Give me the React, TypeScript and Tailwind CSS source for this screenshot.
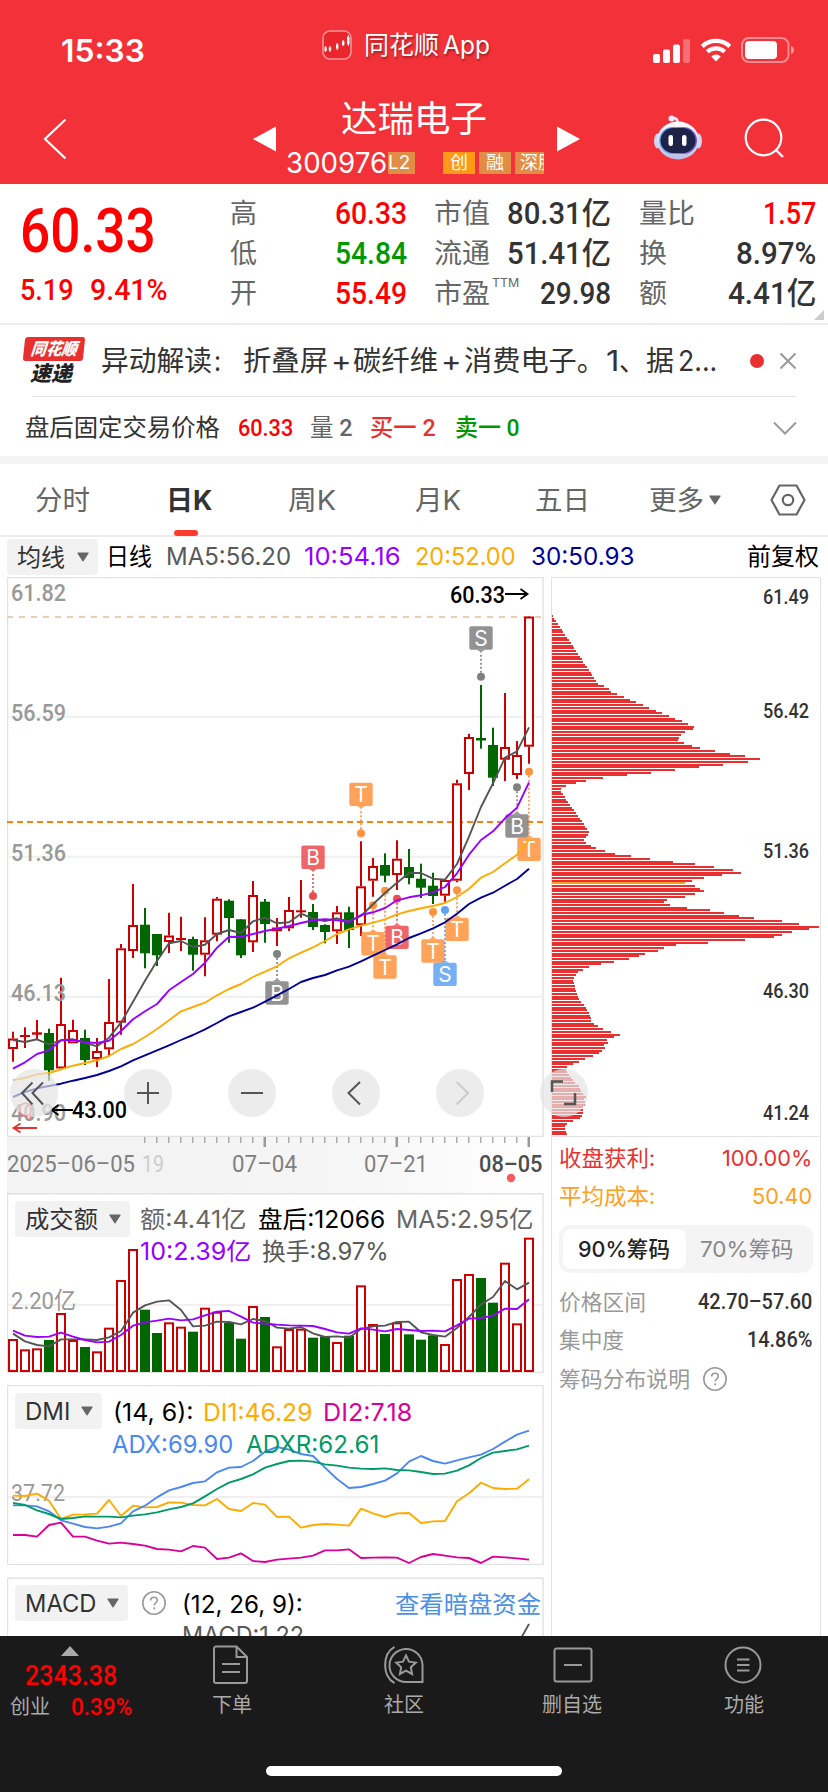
import React, { useLayoutEffect, useRef, useState } from "react"

const UI = "[font-family:Inter,'Noto_Sans_CJK_SC',sans-serif]"
const DIN = "[font-family:Roboto,'Noto_Sans_CJK_SC',sans-serif]"

interface FitProps {
  w: number
  className?: string
  children: React.ReactNode
}

// Single line label that is squeezed or stretched to an exact width
const Fit: React.FC<FitProps> = ({ w, className = "", children }) => {
  const ref = useRef<HTMLSpanElement>(null)
  const [scale, setScale] = useState(1)

  useLayoutEffect(() => {
    if (ref.current) setScale(w / ref.current.offsetWidth)
  }, [w])

  return (
    <span className={`block shrink-0 whitespace-nowrap leading-none ${className}`} style={{ width: w }}>
      <span ref={ref} className="inline-block origin-left" style={{ transform: `scaleX(${scale})` }}>
        {children}
      </span>
    </span>
  )
}

const X0 = 13
const STEP = 12
const cx = (i: number) => X0 + i * STEP

// [up, high, bodyTop, bodyBottom, low]
type Candle = [number, number, number, number, number]

const CANDLES: Candle[] = [
  [1, 1031.7, 1038.5, 1049, 1061.7],
  [1, 1027.3, 1035, 1037, 1048],
  [1, 1020, 1032.3, 1034.7, 1039],
  [0, 1028.7, 1033, 1070.3, 1080.7],
  [1, 977.7, 1024, 1068.5, 1068.5],
  [1, 1019.7, 1030, 1043.3, 1043.3],
  [0, 1029.7, 1038, 1060, 1065],
  [1, 1038, 1051, 1059, 1067],
  [1, 979, 1022, 1049.3, 1056],
  [1, 944, 948.3, 1022.7, 1034.7],
  [1, 884, 925, 951, 958],
  [0, 908, 924.7, 953.3, 968.3],
  [0, 934, 934, 955.3, 966],
  [1, 912.7, 935.5, 942, 953],
  [1, 916.7, 938, 940, 951],
  [0, 936.7, 939, 954.7, 970.7],
  [1, 917.3, 940.3, 954.7, 976.3],
  [1, 897, 898.7, 934.7, 941.3],
  [0, 899.3, 900.7, 918, 942.7],
  [0, 919.3, 919.3, 955.3, 958],
  [1, 881, 895, 942.3, 952],
  [0, 899, 901.7, 924, 942.7],
  [1, 918, 927.5, 931.3, 946],
  [1, 897, 910, 928.3, 931],
  [1, 880, 910.3, 912.3, 917.7],
  [0, 904, 912, 927, 930],
  [0, 924.3, 925, 932, 943.3],
  [1, 906, 912.3, 931.3, 944],
  [0, 906.7, 912.3, 930, 948],
  [1, 841.3, 886.3, 925.3, 936],
  [1, 858, 866, 880.7, 896.7],
  [0, 853.3, 865, 875.7, 882.3],
  [1, 840.3, 858.7, 875, 890],
  [0, 849, 867, 878, 884.3],
  [0, 863.7, 878.7, 887.7, 898],
  [0, 872.7, 885.7, 896, 904],
  [1, 880, 880, 895.7, 901.7],
  [1, 779.7, 783.3, 880.7, 882.3],
  [1, 733.7, 737, 774, 790],
  [0, 685, 738, 740.5, 748.7],
  [0, 727.7, 745, 777.7, 786],
  [1, 693, 747, 759.7, 781],
  [1, 741, 755, 775, 779],
  [1, 616, 616.5, 746.7, 763.7],
]

const MA5 = [1040, 1042, 1039.3, 1044.3, 1040.3, 1039.3, 1042.7, 1046.3, 1037.7, 1022.7, 1001.7, 980.7, 961, 943.3, 941, 947, 944.7, 934, 930, 933, 921.3, 917.7, 923.3, 922.3, 913.7, 918.7, 921, 918.3, 921.3, 916, 904.3, 893, 882.7, 873, 873, 878.7, 879.7, 864, 836.7, 807, 783.3, 757.7, 751.3, 727.3]
const MA10 = [1068.7, 1062.3, 1054, 1050.3, 1040.3, 1039.7, 1042.3, 1043, 1040.7, 1031, 1019.3, 1011.3, 1004, 990.3, 982, 974, 962.7, 947.7, 936.7, 937, 934, 931, 928.7, 926, 923, 920.3, 919.3, 920.3, 922, 915, 912.3, 908, 900.3, 897.3, 895.3, 892.3, 887, 873.3, 854.7, 840, 831.3, 818.3, 807.7, 782.3]
const MA20 = [1080.3, 1078, 1074.3, 1073, 1069.3, 1065.7, 1063, 1060.3, 1056, 1049, 1044, 1037, 1029, 1020.3, 1011.3, 1007, 1002.7, 995.3, 989, 984, 977, 971.7, 966.3, 958.3, 952.7, 947.3, 941, 934, 929.3, 925.7, 922.7, 919.3, 914.3, 911, 908.3, 906, 903, 897, 888.7, 877.7, 872, 863.3, 854.7, 840]
const MA30 = [1097, 1092, 1088.3, 1086, 1083.7, 1080.7, 1078, 1075, 1071, 1066.3, 1060.3, 1055.3, 1050.3, 1045.3, 1040, 1035, 1029.3, 1023, 1016.3, 1012, 1007.7, 1001.7, 995.3, 989, 982, 978, 975, 970.3, 966.7, 961.3, 955.7, 950, 944.3, 938, 933.3, 928.3, 922.3, 913.7, 904, 897.7, 892.7, 885.7, 879, 868.7]

// [candle index, dot y, badge top, letter, colour]
const MARKS: [number, number, number, string, string][] = [
  [39, 676.7, 626.3, "S", "#808080"],
  [29, 833.3, 782.7, "T", "#ff923e"],
  [25, 896, 845.6, "B", "#ec4c50"],
  [22, 954, 981.3, "B", "#808080"],
  [30, 905.3, 932, "T", "#ff923e"],
  [31, 890.7, 955.3, "T", "#ff923e"],
  [32, 898.7, 925.7, "B", "#ec4c50"],
  [35, 912, 939.3, "T", "#ff923e"],
  [36, 910, 962.7, "S", "#5da2f3"],
  [37, 890.3, 917.7, "T", "#ff923e"],
  [42, 787.3, 814.3, "B", "#808080"],
  [43, 771.7, 837.7, "T", "#ff923e"],
]

const VOLUME = [480, 511, 508, 483, 402, 483, 504, 517, 446, 303, 210, 392, 462, 430, 443, 458, 386, 398, 432, 479, 381, 414, 502, 450, 449, 476, 473, 489, 470, 319, 435, 465, 430, 466, 482, 469, 495, 300, 285, 297, 371, 251, 433, 176]
const VOL5 = [461, 484, 495, 499, 478, 478, 478, 480, 472, 453, 398, 376, 365, 361, 390, 439, 437, 425, 426, 433, 417, 423, 443, 446, 441, 460, 471, 469, 473, 447, 439, 437, 426, 425, 457, 465, 470, 444, 411, 373, 351, 303, 328, 308]
const VOL10 = [452, 467, 471, 470, 458, 470, 480, 487, 485, 465, 437, 427, 422, 416, 421, 418, 406, 395, 393, 410, 428, 431, 434, 436, 437, 438, 447, 457, 461, 445, 449, 454, 447, 450, 453, 452, 454, 436, 416, 414, 407, 386, 387, 358]

const DI1 = [377, 378, 371, 392, 447, 434, 433, 431, 390, 438, 407, 412, 411, 397, 398, 405, 406, 387, 417, 423, 399, 404, 441, 440, 473, 465, 462, 464, 467, 416, 430, 441, 430, 429, 459, 454, 453, 394, 370, 338, 354, 357, 356, 328]
const DI2 = [495, 495, 500, 465, 458, 500, 500, 512, 521, 518, 522, 527, 537, 539, 544, 528, 533, 567, 563, 550, 573, 576, 569, 566, 563, 557, 541, 541, 538, 564, 563, 562, 563, 579, 561, 552, 557, 562, 564, 579, 560, 562, 565, 569]
const ADX = [406, 406, 409, 424, 451, 461, 471, 475, 470, 460, 424, 407, 382, 361, 351, 339, 334, 307, 293, 291, 273, 245, 231, 239, 252, 258, 293, 327, 354, 351, 342, 332, 310, 275, 258, 273, 281, 271, 262, 254, 237, 215, 194, 182]
const ADXR = [399, 405, 421, 432, 447, 444, 439, 440, 440, 442, 437, 433, 427, 418, 411, 400, 379, 357, 338, 327, 313, 293, 282, 273, 272, 275, 283, 287, 293, 296, 297, 295, 300, 301, 306, 312, 311, 302, 286, 264, 248, 243, 238, 227]

// Cost distribution, one entry per price level, thirds of a pixel
const CHIPS = [
  24, 27, 33, 39, 45, 51, 54, 60, 66, 72, 78, 84, 87, 93, 99, 105, 111, 114, 120, 126, 132, 138, 141, 147, 153, 159, 177, 192, 198, 216,
  237, 255, 273, 294, 312, 333, 351, 372, 390, 411, 429, 447, 444, 420, 408, 402, 399, 417, 441, 465, 510, 555, 600, 645, 609, 534, 462,
  390, 318, 246, 174, 123, 93, 63, 48, 48, 54, 60, 63, 69, 75, 81, 87, 93, 99, 105, 111, 117, 120, 126, 132, 129, 123, 117, 123, 138, 153,
  180, 210, 258, 315, 384, 450, 507, 564, 588, 531, 477, 441, 420, 450, 465, 477, 450, 420, 366, 357, 375, 426, 495, 537, 582, 627, 711,
  762, 822, 792, 741, 711, 687, 600, 489, 393, 357, 339, 300, 282, 252, 207, 168, 132, 114, 99, 93, 87, 84, 87, 90, 90, 93, 96, 99, 102,
  108, 117, 123, 126, 132, 135, 138, 138, 147, 159, 174, 198, 225, 207, 186, 189, 177, 180, 171, 162, 144, 120, 102, 84, 66, 63, 66, 72,
  78, 84, 90, 102, 105, 108, 114, 123, 117, 120, 120, 114, 114, 114, 111, 105, 84, 66, 60, 60, 63, 66, 66,
]
const CHIP_STEP = 2.7
const AVG_COST_LEVEL = 99

const line = (ys: number[], base = 0, k = 1) => ys.map((y, i) => `${cx(i)},${base + y * k}`).join(" ")

const Line = ({ ys, color, base = 0, k = 1 }: { ys: number[]; color: string; base?: number; k?: number }) => (
  <polyline points={line(ys, base, k)} fill="none" stroke={color} strokeWidth="1.9" strokeLinejoin="round" />
)

const AxisText = ({ x, y, w, children, fill = "#999", size = 24, weight = 500 }: {
  x: number; y: number; w: number; children: string; fill?: string; size?: number; weight?: number
}) => (
  <text x={x} y={y} textLength={w} lengthAdjust="spacingAndGlyphs" fontSize={size} fontWeight={weight} fill={fill} className={DIN}>
    {children}
  </text>
)

const Caret = ({ className = "" }: { className?: string }) => (
  <svg width="12" height="10" viewBox="0 0 12 10" className={`shrink-0 ${className}`}>
    <path d="M1 .5h10a.6.6 0 0 1 .5 1L6.6 8.9a.7.7 0 0 1-1.2 0L.5 1.5a.6.6 0 0 1 .5-1Z" fill="#666" />
  </svg>
)

const HelpIcon = ({ className = "" }: { className?: string }) => (
  <svg width="26" height="26" viewBox="0 0 26 26" className={`shrink-0 ${className}`}>
    <circle cx="13" cy="13" r="11.2" fill="none" stroke="#999" strokeWidth="1.6" />
    <path d="M9.7 10.6c0-2 1.4-3.3 3.3-3.3s3.3 1.2 3.3 3c0 2.4-3.1 2.6-3.1 5.2" fill="none" stroke="#999" strokeWidth="1.6" />
    <circle cx="13.2" cy="18.3" r="1.1" fill="#999" />
  </svg>
)

const StatusBar = () => (
  <div className="flex h-[92px] items-center pt-1 text-white">
    <Fit w={84} className={`${UI} ml-[61px] mt-1 text-[31px] font-semibold`}>15:33</Fit>
    <svg width="30" height="30" viewBox="0 0 30 30" className="ml-[177px] -mt-[6px]">
      <rect x="1" y="1" width="28" height="28" rx="7" fill="#e8262b" stroke="#f79598" strokeWidth="1.6" />
      <path d="M3.500 16v6M8 16v6M15.200 13v7M21.200 10v6M26.300 5v11" stroke="#fff" strokeWidth="1" />
      <path d="M2.500 17h2.200v4H2.500zM6.800 17.500h2.400v3H6.800zM14 14.500h2.400v4H14zM20 11h2.400v4H20zM25 7h2.500v7H25z" fill="#fff" />
    </svg>
    <div className={`${UI} -mt-[5px] ml-3 flex items-center text-[25px] [text-shadow:1px_2px_2px_rgba(0,0,0,.35)]`}>
      <Fit w={75}>同花顺</Fit>
      <Fit w={47} className="ml-1">App</Fit>
    </div>
    <svg width="38" height="24" viewBox="0 0 38 24" className="ml-[163px] mt-1.5">
      <rect x="0" y="15" width="7" height="9" rx="2" fill="#fff" />
      <rect x="10" y="10.500" width="7" height="13.500" rx="2" fill="#fff" />
      <rect x="20" y="5.500" width="7" height="18.500" rx="2" fill="#fff" />
      <rect x="30" y="0" width="7" height="24" rx="2" fill="#fff" opacity=".3" />
    </svg>
    <svg width="32" height="24" viewBox="0 0 32 24" className="ml-[9px] mt-1">
      <path d="M2.200 8.300a20.500 20.500 0 0 1 27.600 0" fill="none" stroke="#fff" strokeWidth="4.300" />
      <path d="M7.300 13.800a13 13 0 0 1 17.400 0" fill="none" stroke="#fff" strokeWidth="4.200" />
      <path d="M11.300 18.400a7 7 0 0 1 9.400 0L16 23.500Z" fill="#fff" />
    </svg>
    <svg width="54" height="26" viewBox="0 0 54 26" className="ml-[9px] mt-1">
      <rect x="1" y="1" width="46.500" height="24" rx="7" fill="none" stroke="#fff" strokeOpacity=".45" strokeWidth="2" />
      <rect x="4" y="4" width="32" height="18" rx="4" fill="#fff" />
      <path d="M50 9c4 1 4 7 0 8Z" fill="#fff" fillOpacity=".5" />
    </svg>
  </div>
)

const RobotIcon = () => (
  <svg width="50" height="46" viewBox="0 0 50 46">
    <defs>
      <linearGradient id="shell" x1="0" y1="0" x2="0" y2="1">
        <stop offset="0" stopColor="#ffffff" />
        <stop offset="1" stopColor="#b9bfe6" />
      </linearGradient>
      <linearGradient id="visor" x1="0" y1="0" x2="1" y2="0">
        <stop offset="0" stopColor="#63b7ef" />
        <stop offset="1" stopColor="#7a4be0" />
      </linearGradient>
    </defs>
    <path d="M18 3.500c3-1.500 7 0 6.500 4.500" fill="none" stroke="#e9e6f7" strokeWidth="2.600" />
    <circle cx="18.500" cy="3.500" r="3" fill="#efeafa" />
    <ellipse cx="4.500" cy="26" rx="3.500" ry="7.500" fill="#cfd3ef" />
    <ellipse cx="45.500" cy="26" rx="3.500" ry="7.500" fill="#cfd3ef" />
    <ellipse cx="25" cy="25.500" rx="21" ry="19" fill="url(#shell)" />
    <rect x="6" y="12" width="38" height="27" rx="13.500" fill="url(#visor)" />
    <rect x="7.500" y="13" width="35" height="25" rx="12.500" fill="#1d2247" />
    <rect x="15.500" y="20" width="4.500" height="11" rx="2.200" fill="#fff" />
    <rect x="29" y="20" width="4.500" height="11" rx="2.200" fill="#fff" />
  </svg>
)

const TitleBar = () => (
  <div className="flex h-[92px] text-white">
    <svg width="24" height="42" viewBox="0 0 24 42" className="ml-[43px] mt-[26px]">
      <path d="M22.500 1.500 2 21l20.500 19.500" fill="none" stroke="#fff" strokeWidth="2.200" />
    </svg>
    <svg width="24" height="26" viewBox="0 0 24 26" className="ml-[186px] mt-[34px]">
      <path d="M0 13 23 .5v25Z" fill="#fff" />
    </svg>
    <div className="ml-[9px] w-[259px] pt-[9px]">
      <Fit w={146} className={`${UI} ml-[55px] text-[36px]`}>达瑞电子</Fit>
      <div className={`${UI} mt-[14px] flex h-[24px] items-center`}>
        <Fit w={101} className="text-[28px]">300976</Fit>
        <span className="ml-px flex h-[22px] w-[27px] items-center bg-[#e18d45] text-[18px] leading-none">
          <Fit w={22}>L2</Fit>
        </span>
        <div className="ml-[28px] flex w-[101px] gap-1 overflow-hidden text-[18px] leading-none">
          <span className="flex h-[22px] w-8 shrink-0 items-center justify-center bg-[#ff9a17]">创</span>
          <span className="flex h-[22px] w-8 shrink-0 items-center justify-center bg-[#e18d45]">融</span>
          <span className="flex h-[22px] w-12 shrink-0 items-center bg-[#e18d45] pl-[5px]">深股</span>
        </div>
      </div>
    </div>
    <svg width="24" height="26" viewBox="0 0 24 26" className="ml-[11px] mt-[34px]">
      <path d="M1 .5 24 13 1 25.500Z" fill="#fff" />
    </svg>
    <div className="ml-[73px] mt-[23px]">
      <RobotIcon />
    </div>
    <svg width="42" height="42" viewBox="0 0 42 42" className="ml-[41px] mt-[26px]">
      <circle cx="19.500" cy="19.500" r="17.800" fill="none" stroke="#fff" strokeWidth="2.200" />
      <path d="m32 32 7 7" stroke="#fff" strokeWidth="2.400" />
    </svg>
  </div>
)

const QUOTES = [
  [
    { label: "高", lw: 27, value: "60.33", w: 72, color: "text-[#ff0000]" },
    { label: "低", lw: 27, value: "54.84", w: 72, color: "text-[#009900]" },
    { label: "开", lw: 27, value: "55.49", w: 72, color: "text-[#ff0000]" },
  ],
  [
    { label: "市值", lw: 56, value: "80.31亿", w: 104, color: "text-[#333]" },
    { label: "流通", lw: 56, value: "51.41亿", w: 104, color: "text-[#333]" },
    { label: "市盈", lw: 56, value: "29.98", w: 71, color: "text-[#333]", sup: "TTM" },
  ],
  [
    { label: "量比", lw: 56, value: "1.57", w: 53, color: "text-[#ff0000]" },
    { label: "换", lw: 28, value: "8.97%", w: 80, color: "text-[#333]" },
    { label: "额", lw: 28, value: "4.41亿", w: 88, color: "text-[#333]" },
  ],
]
const QUOTE_COLS = ["ml-[60px] w-[177px]", "ml-[27px] w-[177px]", "ml-[28px] w-[177px]"]

const Quote = () => (
  <div className="relative flex h-[141px] border-b-2 border-[#ececec]">
    <div className={`${DIN} ml-5 w-[150px] pt-[17px] text-[#ff0000]`}>
      <Fit w={136} className="text-[61px] font-medium">60.33</Fit>
      <div className="mt-[13px] flex text-[30px] font-medium">
        <Fit w={54}>5.19</Fit>
        <Fit w={78} className="ml-4">9.41%</Fit>
      </div>
    </div>
    {QUOTES.map((col, c) => (
      <div key={c} className={`${QUOTE_COLS[c]} pt-[9px]`}>
        {col.map((q, r) => (
          <div key={r} className="flex h-10 items-center">
            <Fit w={q.lw} className={`${UI} text-[27px] text-[#666]`}>{q.label}</Fit>
            {q.sup && <Fit w={27} className={`${UI} -mt-[20px] ml-0.5 text-[12px] text-[#666]`}>{q.sup}</Fit>}
            <Fit w={q.w} className={`${DIN} ml-auto text-[31px] font-medium ${q.color}`}>{q.value}</Fit>
          </div>
        ))}
      </div>
    ))}
    <svg width="10" height="10" className="absolute bottom-[3px] right-1">
      <path d="M10 0v10H0Z" fill="#ccc" />
    </svg>
  </div>
)

const Notice = () => (
  <div className="h-[139px] border-b-8 border-[#f4f4f4]">
    <div className="flex h-[71px] items-center">
      <div className={`${UI} ml-6 w-[60px]`}>
        <div className="flex h-6 -skew-x-6 items-center justify-center rounded-[3px] bg-[#e8302f] text-white">
          <Fit w={46} className="text-[17px] font-black italic">同花顺</Fit>
        </div>
        <Fit w={42} className="ml-[6px] mt-[2px] text-[21px] font-black italic text-[#222]">速递</Fit>
      </div>
      <div className={`${UI} ml-[17px] flex text-[28px] text-[#333]`}>
        <Fit w={111}>异动解读</Fit>
        <Fit w={7} className="ml-0.5">:</Fit>
        <Fit w={85} className="ml-[22px]">折叠屏</Fit>
        <Fit w={21} className="ml-[3px]">+</Fit>
        <Fit w={85} className="ml-[1px]">碳纤维</Fit>
        <Fit w={21} className="ml-[3px]">+</Fit>
        <Fit w={141} className="ml-[2px]">消费电子。</Fit>
        <Fit w={13} className="ml-[1px]">1</Fit>
        <Fit w={26}>、</Fit>
        <Fit w={28} className="ml-[1px]">据</Fit>
        <Fit w={39} className="ml-[4px]">2...</Fit>
      </div>
      <span className="ml-auto h-[14px] w-[14px] rounded-full bg-[#e8302f]" />
      <svg width="18" height="18" viewBox="0 0 18 18" className="ml-[15px] mr-[31px]">
        <path d="m1.500 1.500 15 15m0-15-15 15" stroke="#999" strokeWidth="2" />
      </svg>
    </div>
    <div className="ml-8 mr-8 h-px bg-[#e6e6e6]" />
    <div className={`${DIN} flex h-[62px] items-center text-[24px]`}>
      <Fit w={195} className="ml-[25px] text-[#333]">盘后固定交易价格</Fit>
      <Fit w={55} className="ml-[18px] font-medium text-[#ff0000]">60.33</Fit>
      <Fit w={43} className="ml-[17px] text-[#666]"><span>量</span> <b className="font-medium">2</b></Fit>
      <Fit w={66} className="ml-[17px] font-medium text-[#e8302f]">买一 2</Fit>
      <Fit w={65} className="ml-[19px] font-medium text-[#009900]">卖一 0</Fit>
      <svg width="24" height="14" viewBox="0 0 24 14" className="ml-auto mr-[31px]">
        <path d="m1 1.500 11 11 11-11" fill="none" stroke="#999" strokeWidth="2" />
      </svg>
    </div>
  </div>
)

const TABS = [
  { label: "分时", w: 55, gap: "ml-[35px]" },
  { label: "日K", w: 46, gap: "ml-[76px]", active: true },
  { label: "周K", w: 48, gap: "ml-[76px]" },
  { label: "月K", w: 46, gap: "ml-[79px]" },
  { label: "五日", w: 55, gap: "ml-[74px]" },
  { label: "更多", w: 55, gap: "ml-[59px]" },
]

const Tabs = () => (
  <div className="flex h-[73px] items-center border-b-2 border-[#ececec]">
    {TABS.map((tab) => (
      <div key={tab.label} className={`${tab.gap} relative flex h-full items-center`}>
        <Fit w={tab.w} className={`${UI} mt-0.5 text-[27px] ${tab.active ? "font-bold text-[#333]" : "text-[#666]"}`}>{tab.label}</Fit>
        {tab.active && <span className="absolute -bottom-px left-2 h-[6px] w-6 rounded-[3px] bg-[#ff3b30]" />}
      </div>
    ))}
    <Caret className="ml-[5px]" />
    <svg width="36" height="32" viewBox="0 0 36 32" className="ml-auto mr-[22px]">
      <path d="M9.500 1.500h17L34.500 16l-8 14.500h-17L1.500 16Z" fill="none" stroke="#666" strokeWidth="2.200" strokeLinejoin="round" />
      <circle cx="18" cy="16" r="5.200" fill="none" stroke="#666" strokeWidth="2.200" />
    </svg>
  </div>
)

const Picker = ({ label, w, className = "" }: { label: string; w: number; className?: string }) => (
  <div className={`${UI} flex h-9 shrink-0 items-center rounded bg-[#f2f2f2] pl-[10px] pr-[9px] text-[24px] text-[#333] ${className}`}>
    <Fit w={w} className="mt-px">{label}</Fit>
    <Caret className="ml-auto" />
  </div>
)

const AverageRow = () => (
  <div className={`${UI} flex h-10 items-center text-[24px]`}>
    <Picker label="均线" w={48} className="ml-[7px] w-[91px]" />
    <Fit w={46} className="ml-[8px] text-black">日线</Fit>
    <Fit w={125} className="ml-[14px] text-[#595959]">MA5:56.20</Fit>
    <Fit w={97} className="ml-[13px] text-[#9900ff]">10:54.16</Fit>
    <Fit w={101} className="ml-[14px] text-[#ffaa00]">20:52.00</Fit>
    <Fit w={103} className="ml-[15px] text-[#000099]">30:50.93</Fit>
    <Fit w={72} className="ml-auto mr-[9px] text-black">前复权</Fit>
  </div>
)

const CandleShape = ({ candle, i }: { candle: Candle; i: number }) => {
  const [up, high, top, bottom, low] = candle
  const x = cx(i)
  const color = up ? "#cc0000" : "#006600"
  if (!up || bottom - top < 3) {
    return (
      <g fill={color}>
        <rect x={x - 1} y={high} width="2" height={low - high} />
        <rect x={x - 5} y={top} width="10" height={bottom - top} />
      </g>
    )
  }
  return (
    <g>
      <path d={`M${x} ${high}V${top}M${x} ${bottom}V${low}`} stroke={color} strokeWidth="2" />
      <rect x={x - 4} y={top + 1} width="8" height={bottom - top - 2} fill="#fff" stroke={color} strokeWidth="2" />
    </g>
  )
}

const Mark = ({ mark }: { mark: (typeof MARKS)[number] }) => {
  const [i, dot, top, letter, color] = mark
  const x = cx(i)
  const above = top < dot
  const edge = above ? top + 23.4 : top
  const tip = above ? edge + 2.5 : edge - 2.5
  return (
    <g>
      <path d={`M${x} ${dot}V${tip}`} stroke={color} strokeWidth="1.6" strokeDasharray="2 2" />
      <circle cx={x} cy={dot} r="4" fill={color} />
      <g opacity=".85">
        <rect x={x - 11.7} y={top} width="23.400" height="23.400" rx="2" fill={color} />
        <path d={`M${x - 4} ${edge}L${x} ${tip}L${x + 4} ${edge}Z`} fill={color} />
      </g>
      <text x={x} y={top + 19.2} textAnchor="middle" fontSize="21" fill="#fff" className={UI}>{letter}</text>
    </g>
  )
}

const KLineChart = () => (
  <svg width="537" height="560" viewBox="7 577 537 560" className="block">
    <path d="M7.500 577.500H543V1136.500H7.500Z" fill="none" stroke="#e2e2e2" strokeWidth="1.400" />
    <path d="M8 716.700H543M8 856.700H543M8 996.700H543" stroke="#f0f0f0" strokeWidth="2" />
    <path d="M7 617H543" stroke="#e6cfb3" strokeWidth="2" strokeDasharray="6 6" />
    <path d="M7 822H543" stroke="#ff8010" strokeWidth="2" strokeDasharray="6 4" />
    {CANDLES.map((c, i) => <CandleShape key={i} candle={c} i={i} />)}
    <AxisText x={11} y={601} w={55}>61.82</AxisText>
    <AxisText x={11} y={721} w={55}>56.59</AxisText>
    <AxisText x={11} y={861} w={55}>51.36</AxisText>
    <AxisText x={11} y={1001} w={55}>46.13</AxisText>
    <AxisText x={11} y={1121} w={55}>40.90</AxisText>
    {MARKS.map((m, i) => <Mark key={i} mark={m} />)}
    <Line ys={MA5} color="#555" />
    <Line ys={MA10} color="#9900ff" />
    <Line ys={MA20} color="#ffaa00" />
    <Line ys={MA30} color="#000099" />
    <AxisText x={450} y={602.5} w={55} fill="#000">60.33</AxisText>
    <path d="M505 594H527M520.500 589l7 5-7 5" fill="none" stroke="#000" strokeWidth="1.800" />
    <AxisText x={72} y={1118} w={55} fill="#000">43.00</AxisText>
    <path d="M73 1110H52M58.500 1105l-7 5 7 5" fill="none" stroke="#000" strokeWidth="1.800" />
    <circle cx="47" cy="1108.500" r="4" fill="none" stroke="#bbb" strokeWidth="2" />
    <path d="M30.500 1103v16M31 1110c0-9-11-9-11 0 0 8 11 8 11 0" fill="none" stroke="#f26a6a" strokeWidth="1.800" />
    <path d="M37 1128H14M20.500 1123.500l-7 4.500 7 4.500" fill="none" stroke="#e8302f" strokeWidth="1.800" />
  </svg>
)

const MAJOR_TICKS = [21, 32, 43]

const DateAxis = () => (
  <svg width="537" height="56" viewBox="7 1137 537 56" className="block bg-linear-to-r from-[#f3f3f3] from-25% via-[#f6f6f6] via-65% to-white">
    {Array.from({ length: 33 }, (_, n) => n + 11).map((i) =>
      MAJOR_TICKS.includes(i) ? (
        <rect key={i} x={cx(i) - 1.5} y="1137" width="2.500" height="10" fill="#999" />
      ) : (
        <rect key={i} x={cx(i) - 0.8} y="1137" width="1.200" height="6" fill="#999" />
      )
    )}
    <AxisText x={7} y={1172} w={128} fill="#808080" weight={400}>2025–06–05</AxisText>
    <AxisText x={142} y={1172} w={22} fill="#ccc" weight={400}>19</AxisText>
    <AxisText x={232} y={1172} w={65} fill="#808080" weight={400}>07–04</AxisText>
    <AxisText x={364} y={1172} w={64} fill="#808080" weight={400}>07–21</AxisText>
    <AxisText x={479} y={1172} w={63.5} fill="#4d4d4d">08–05</AxisText>
    <circle cx="511" cy="1178" r="4.200" fill="#f55a5c" />
  </svg>
)

const VolumePanel = () => (
  <div className="relative h-[180px]">
    <svg width="537" height="180" viewBox="7 1193 537 180" className="absolute inset-0">
      <path d="M7.500 1193.700H543V1372.500H7.500Z" fill="none" stroke="#e2e2e2" strokeWidth="1.400" />
      <path d="M8 1305H543" stroke="#f0f0f0" strokeWidth="2" />
      <AxisText x={11} y={1309} w={65} weight={400}>2.20亿</AxisText>
      {VOLUME.map((v, i) => {
        const y = 1180 + v / 3
        return CANDLES[i][0] ? (
          <rect key={i} x={cx(i) - 4} y={y} width="8" height={1371 - y} fill="#fff" stroke="#cc0000" strokeWidth="2" />
        ) : (
          <rect key={i} x={cx(i) - 5} y={y - 1} width="10" height={1373 - y} fill="#006600" />
        )
      })}
      <Line ys={VOL5} color="#555" base={1180} k={1 / 3} />
      <Line ys={VOL10} color="#9900ff" base={1180} k={1 / 3} />
    </svg>
    <div className={`${UI} relative flex pt-2 text-[24px]`}>
      <Picker label="成交额" w={73} className="ml-2 w-[115px]" />
      <div className="ml-[10px] pt-[7px]">
        <div className="flex text-[#666]">
          <Fit w={106}>额:4.41亿</Fit>
          <Fit w={127} className="ml-[12px] text-black">盘后:12066</Fit>
          <Fit w={138} className="ml-[11px]">MA5:2.95亿</Fit>
        </div>
        <div className="mt-2 flex text-[#595959]">
          <Fit w={111} className="text-[#9900ff]">10:2.39亿</Fit>
          <Fit w={127} className="ml-[11px]">换手:8.97%</Fit>
        </div>
      </div>
    </div>
  </div>
)

const DmiPanel = () => (
  <div className="relative mt-3 h-[180px]">
    <svg width="537" height="180" viewBox="7 1385 537 180" className="absolute inset-0">
      <path d="M7.500 1385.500H543V1564.500H7.500Z" fill="none" stroke="#e2e2e2" strokeWidth="1.400" />
      <path d="M8 1497H543" stroke="#f0f0f0" strokeWidth="2" />
      <AxisText x={11} y={1501} w={54} weight={400}>37.72</AxisText>
      <Line ys={DI1} color="#ffaa00" base={1370} k={1 / 3} />
      <Line ys={DI2} color="#d9009a" base={1370} k={1 / 3} />
      <Line ys={ADX} color="#4a88f0" base={1370} k={1 / 3} />
      <Line ys={ADXR} color="#009a66" base={1370} k={1 / 3} />
    </svg>
    <div className={`${UI} relative flex pt-2 text-[24px]`}>
      <Picker label="DMI" w={45} className="ml-2 w-[87px]" />
      <div className="ml-[11px] pt-2">
        <div className="flex">
          <Fit w={80} className="text-black">(14, 6):</Fit>
          <Fit w={109} className="ml-[10px] text-[#ffaa00]">DI1:46.29</Fit>
          <Fit w={89} className="ml-[11px] text-[#d9009a]">DI2:7.18</Fit>
        </div>
        <div className="mt-2 flex">
          <Fit w={121} className="-ml-px text-[#4a88f0]">ADX:69.90</Fit>
          <Fit w={133} className="ml-[13px] text-[#009a66]">ADXR:62.61</Fit>
        </div>
      </div>
    </div>
  </div>
)

const MacdPanel = () => (
  <div className="relative mt-3 h-[59px] overflow-hidden">
    <svg width="537" height="60" viewBox="7 1576 537 60" className="absolute inset-0">
      <path d="M7.500 1650V1577.300H543V1650" fill="none" stroke="#e2e2e2" strokeWidth="1.400" />
      <path d="m529 1623-9 16" stroke="#555" strokeWidth="1.800" />
    </svg>
    <div className={`${UI} relative flex pt-2 text-[24px]`}>
      <Picker label="MACD" w={71} className="ml-2 w-[113px]" />
      <HelpIcon className="ml-[13px] mt-[5px]" />
      <div className="ml-[15px] pt-2">
        <Fit w={121} className="text-black">(12, 26, 9):</Fit>
        <Fit w={122} className="mt-[7px] text-[#595959]">MACD:1.22</Fit>
      </div>
      <Fit w={146} className="ml-auto mr-[3px] mt-2 text-[#4a90e8]">查看暗盘资金</Fit>
    </div>
  </div>
)

const PRICE_LABELS: [string, number][] = [["61.49", 603.5], ["56.42", 717.5], ["51.36", 857.5], ["46.30", 997.5], ["41.24", 1119.5]]

const ChipChart = () => (
  <svg width="270" height="560" viewBox="551 577 270 560" className="block">
    {CHIPS.map((end, n) => (
      <rect
        key={n}
        x="552"
        y={615 + Math.round(n * CHIP_STEP)}
        width={(end - 21) / 3}
        height="2"
        fill={n === AVG_COST_LEVEL ? "#ff9f20" : "#e93030"}
        shapeRendering="crispEdges"
      />
    ))}
    {PRICE_LABELS.map(([text, y]) => (
      <AxisText key={text} x={763} y={y} w={46} size={20.5} fill="#333">{text}</AxisText>
    ))}
    <path d="M551 1136.500H819" stroke="#e2e2e2" strokeWidth="1.200" />
  </svg>
)

const ChipPanel = () => (
  <div className="ml-[7px] w-[270px] shrink-0 border-x border-t border-[#e2e2e2]">
    <div className="-mx-px -mt-px"><ChipChart /></div>
    <div className={`${UI} pl-[7px] pr-2 text-[22px]`}>
      <div className="mt-[2px] flex h-[38px] items-center justify-between text-[#e8302f]">
        <Fit w={96}>收盘获利:</Fit>
        <Fit w={90}>100.00%</Fit>
      </div>
      <div className="flex h-[38px] items-center justify-between text-[#ffa020]">
        <Fit w={96}>平均成本:</Fit>
        <Fit w={60}>50.40</Fit>
      </div>
      <div className="mt-[10px] flex h-12 w-[254px] items-center rounded-xl bg-[#f4f4f4] p-1">
        <div className="flex h-10 w-[123px] items-center rounded-lg bg-white pl-[15px] font-medium text-[#222]">
          <Fit w={92}>90%筹码</Fit>
        </div>
        <Fit w={94} className="ml-[14px] text-[#888]">70%筹码</Fit>
      </div>
      <div className="mt-[10px] flex h-[38px] items-center justify-between text-[#999]">
        <Fit w={87}>价格区间</Fit>
        <Fit w={114} className={`${DIN} font-medium text-[#333]`}>42.70–57.60</Fit>
      </div>
      <div className="flex h-[38px] items-center justify-between text-[#999]">
        <Fit w={65}>集中度</Fit>
        <Fit w={65} className={`${DIN} font-medium text-[#333]`}>14.86%</Fit>
      </div>
      <div className="flex h-10 items-center text-[#999]">
        <Fit w={131}>筹码分布说明</Fit>
        <HelpIcon className="ml-[12px]" />
      </div>
    </div>
  </div>
)

const CONTROLS = [
  <path key="l" d="M22.500 13.500 12 24l10.500 11.500M33 13.500 22.500 24 33 35.500" />,
  <path key="p" d="M24 13v22M13 24h22" />,
  <path key="m" d="M13 24h22" />,
  <path key="b" d="M28 13 16.500 24 28 35.500" />,
  <path key="f" d="m20.500 13 11.500 11-11.500 11.500" stroke="#ccc" />,
  <path key="x" d="M23 12.500H12V23M24 35h11V24" strokeWidth="2.500" />,
]

// Floating zoom and scroll buttons over the K line chart
const Controls = () => (
  <div className="absolute left-[10px] top-[492px] flex">
    {CONTROLS.map((icon, i) => (
      <div key={i} className={`flex h-12 w-12 rounded-full bg-[#e4e4e4]/70 ${i === 0 ? "mr-[66px]" : "mr-14"}`}>
        <svg width="48" height="48" viewBox="0 0 48 48" fill="none" stroke="#555" strokeWidth="2">{icon}</svg>
      </div>
    ))}
  </div>
)

const NAV = [
  {
    label: "下单",
    w: 40,
    className: "ml-[69px] w-[60px]",
    icon: <path d="M2 3.500a2 2 0 0 1 2-2h20.500L35 12v24a2 2 0 0 1-2 2H4a2 2 0 0 1-2-2ZM24.500 1.500V12H35M10 19h18M10 27h18" />,
  },
  {
    label: "社区",
    w: 40,
    className: "ml-[112px] w-[60px]",
    icon: (
      <>
        <path d="M38.500 37V20a16.500 16.500 0 1 0-16.500 17Z" />
        <path d="M10.500 1.800C-2 9-2 31 10.500 38.200" />
        <path d="m22 10.500 3 6.200 6.800.9-5 4.700 1.300 6.700-6.100-3.300-6.100 3.300 1.300-6.700-5-4.700 6.800-.9Z" />
      </>
    ),
  },
  {
    label: "删自选",
    w: 60,
    className: "ml-[108px] w-[60px]",
    icon: <path d="M2.500 5.500a2 2 0 0 1 2-2h33a2 2 0 0 1 2 2v29a2 2 0 0 1-2 2h-33a2 2 0 0 1-2-2ZM12 20h18" />,
  },
  {
    label: "功能",
    w: 40,
    className: "ml-[112px] w-[60px]",
    icon: <path d="M19 2.500a17.500 17.500 0 1 0 0 35 17.500 17.500 0 1 0 0-35ZM13 14.500h12.500M13 20h12.500M13 25.500h12.500" />,
  },
]

const BottomBar = () => (
  <div className="relative flex h-[156px] bg-[#1a1a1a]">
    <div className={`${DIN} w-[133px] pl-[10px] pt-[10px] text-[#ff0000]`}>
      <svg width="18" height="10" viewBox="0 0 18 10" className="ml-[51px]">
        <path d="M9 0 18 10H0Z" fill="#aaa" />
      </svg>
      <Fit w={92} className="ml-[15px] mt-[6px] text-[28px] font-medium">2343.38</Fit>
      <div className="mt-[5px] flex items-center">
        <Fit w={40} className={`${UI} text-[20px] text-[#aaa]`}>创业</Fit>
        <Fit w={61} className="ml-[21px] text-[24px] font-medium">0.39%</Fit>
      </div>
    </div>
    {NAV.map((item) => (
      <div key={item.label} className={`${item.className} flex flex-col items-center pt-[9px]`}>
        <svg width="41" height="40" viewBox="0 0 41 40" fill="none" stroke="#999" strokeWidth="2">{item.icon}</svg>
        <Fit w={item.w} className={`${UI} mt-[10px] text-[20px] text-[#aaa]`}>{item.label}</Fit>
      </div>
    ))}
    <span className="absolute left-[266px] top-[130px] h-[10px] w-[296px] rounded-full bg-white" />
  </div>
)

export default function App() {
  return (
    <div className={`${UI} h-[1792px] w-[828px] overflow-hidden bg-white`}>
      <div className="h-[184px] bg-[#f23138]">
        <StatusBar />
        <TitleBar />
      </div>
      <Quote />
      <Notice />
      <Tabs />
      <AverageRow />
      <div className="relative flex h-[1059px] overflow-hidden">
        <div className="ml-[7px] w-[537px] shrink-0">
          <KLineChart />
          <DateAxis />
          <VolumePanel />
          <DmiPanel />
          <MacdPanel />
        </div>
        <ChipPanel />
        <Controls />
      </div>
      <BottomBar />
    </div>
  )
}
